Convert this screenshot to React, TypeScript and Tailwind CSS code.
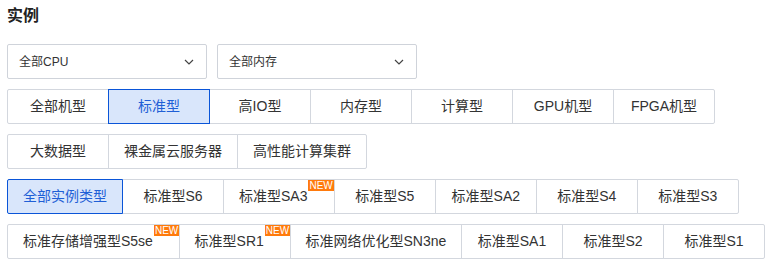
import React from "react";

type Tab = { label: string; isNew?: boolean; active?: boolean };

const rows: Tab[][] = [
  [
    { label: "全部机型" },
    { label: "标准型", active: true },
    { label: "高IO型" },
    { label: "内存型" },
    { label: "计算型" },
    { label: "GPU机型" },
    { label: "FPGA机型" },
  ],
  [{ label: "大数据型" }, { label: "裸金属云服务器" }, { label: "高性能计算集群" }],
  [
    { label: "全部实例类型", active: true },
    { label: "标准型S6" },
    { label: "标准型SA3", isNew: true },
    { label: "标准型S5" },
    { label: "标准型SA2" },
    { label: "标准型S4" },
    { label: "标准型S3" },
  ],
  [
    { label: "标准存储增强型S5se", isNew: true },
    { label: "标准型SR1", isNew: true },
    { label: "标准网络优化型SN3ne" },
    { label: "标准型SA1" },
    { label: "标准型S2" },
    { label: "标准型S1" },
  ],
];

function Chevron() {
  return (
    <svg width="10" height="6" viewBox="0 0 10 6" fill="none">
      <path d="M1 1l4 4 4-4" stroke="#444" strokeWidth="1.2" />
    </svg>
  );
}

function Select({ label }: { label: string }) {
  return (
    <div className="flex h-[35px] w-[200px] items-center justify-between rounded-[2px] border border-[#cfd3da] bg-white pl-[11px] pr-[12px] text-[12px] text-[#333]">
      <span>{label}</span>
      <Chevron />
    </div>
  );
}

function TabRow({ tabs }: { tabs: Tab[] }) {
  return (
    <div className="flex">
      {tabs.map((t, i) => {
        const first = i === 0;
        const last = i === tabs.length - 1;
        return (
          <div
            key={t.label}
            className={
              "relative flex h-[35px] min-w-[102px] items-center border text-[14px] " +
              (first ? "rounded-l-[2px] " : "-ml-px ") +
              (last ? "rounded-r-[2px] " : "") +
              (t.isNew ? "pl-[15px] pr-0 " : "justify-center px-[15px] ") +
              (t.active
                ? "z-10 border-[#0a55d8] bg-[#d9e6fb] text-[#1f5fd6]"
                : "border-[#d3d7de] bg-white text-[#333]")
            }
          >
            <span className="whitespace-nowrap">{t.label}</span>
            {t.isNew && (
              <span className="ml-[1px] self-start bg-[#ff7a0c] px-[1px] text-[10px] leading-[11px] text-white">
                NEW
              </span>
            )}
          </div>
        );
      })}
    </div>
  );
}

export default function App() {
  return (
    <div
      className="h-[265px] w-[772px] bg-white px-[7px]"
      style={{ fontFamily: '"Liberation Sans", "Noto Sans CJK SC", sans-serif' }}
    >
      <div className="pt-[4px] text-[16px] font-bold leading-[24px] text-[#222]">实例</div>
      <div className="mt-[16px] flex gap-[10px]">
        <Select label="全部CPU" />
        <Select label="全部内存" />
      </div>
      <div className="mt-[10px] flex flex-col gap-[10px]">
        {rows.map((r, i) => (
          <TabRow key={i} tabs={r} />
        ))}
      </div>
    </div>
  );
}
